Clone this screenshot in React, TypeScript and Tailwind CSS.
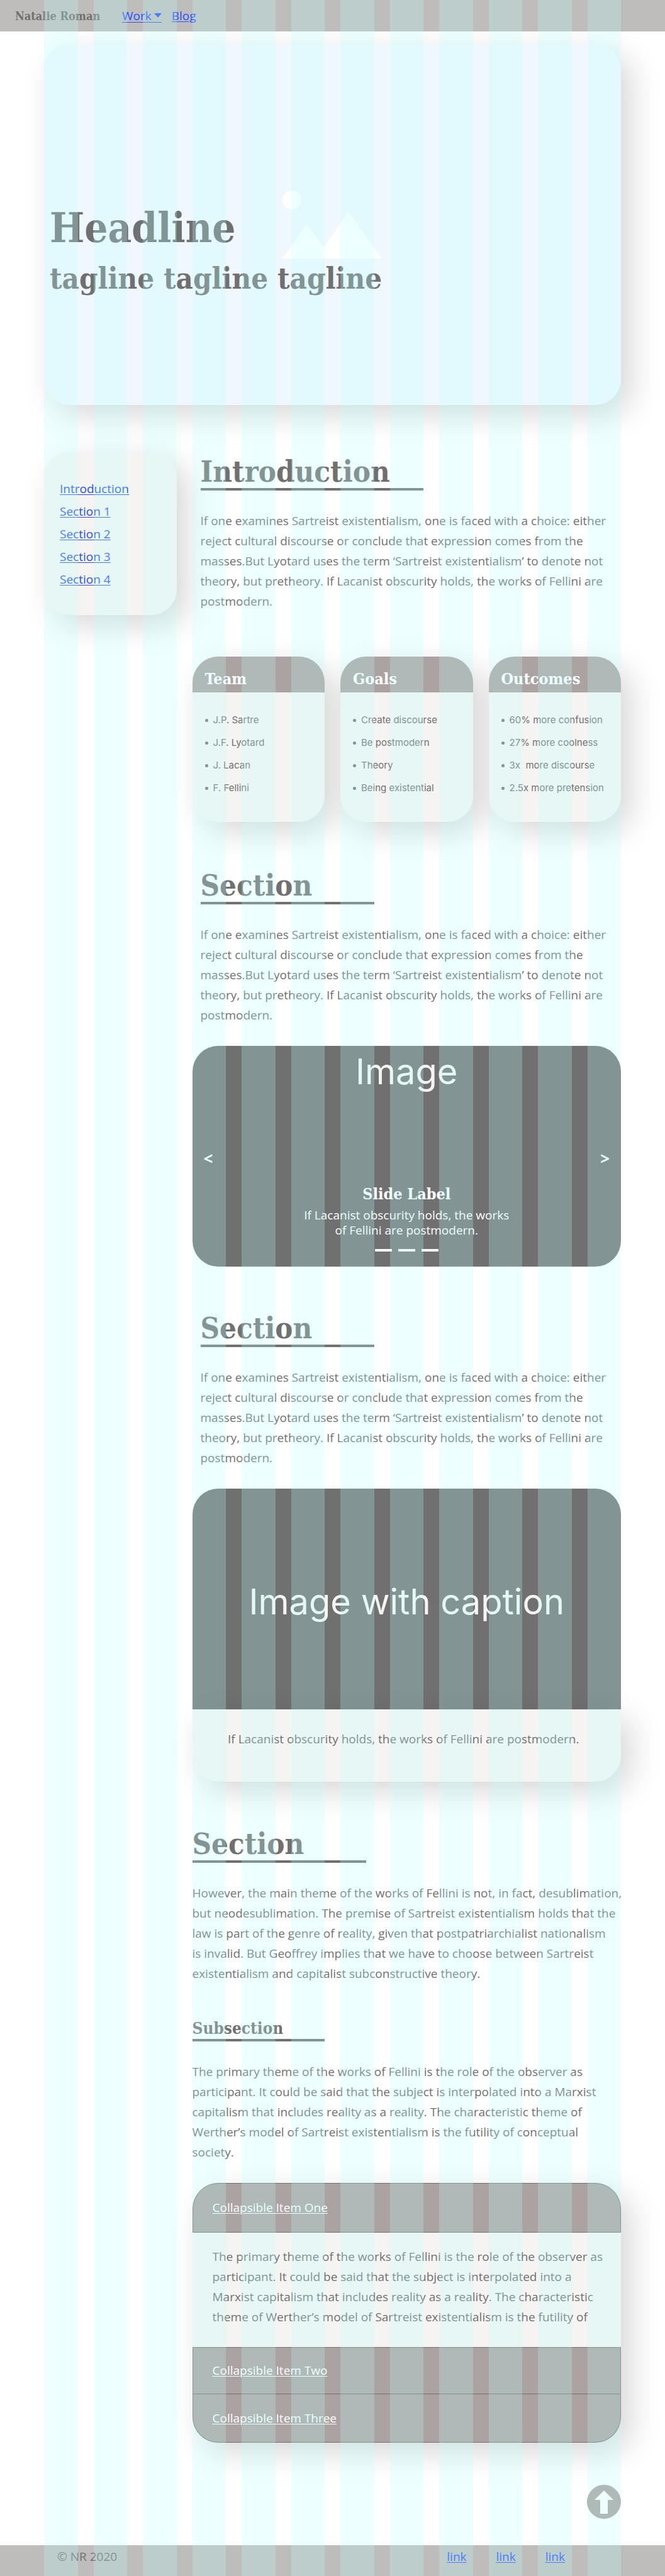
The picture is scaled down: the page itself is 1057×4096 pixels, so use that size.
import type { ReactNode } from "react";

const SERIF = "font-['DejaVu_Serif_Condensed','DejaVu_Serif',serif]";
const SHADOW = "shadow-[16px_16px_50px_rgba(0,0,0,0.16)]";
const LINK = "text-[#2450ff] underline underline-offset-2";
const TOGGLE = "w-full pl-[31px] text-left text-white underline underline-offset-2";
const PLACEHOLDER = "font-['Inter',sans-serif] text-[56px] leading-[66px] text-[#f6f4f3]";

const TOC = ["Introduction", "Section 1", "Section 2", "Section 3", "Section 4"];

const CARDS = [
  { title: "Team", items: ["J.P. Sartre", "J.F. Lyotard", "J. Lacan", "F. Fellini"] },
  { title: "Goals", items: ["Create discourse", "Be postmodern", "Theory", "Being existential"] },
  {
    title: "Outcomes",
    items: ["60% more confusion", "27% more coolness", "3x  more discourse", "2.5x more pretension"],
  },
];

const INTRO = [
  "If one examines Sartreist existentialism, one is faced with a choice: either",
  "reject cultural discourse or conclude that expression comes from the",
  "masses.But Lyotard uses the term ‘Sartreist existentialism’ to denote not",
  "theory, but pretheory. If Lacanist obscurity holds, the works of Fellini are",
  "postmodern.",
];

const FELLINI = [
  "However, the main theme of the works of Fellini is not, in fact, desublimation,",
  "but neodesublimation. The premise of Sartreist existentialism holds that the",
  "law is part of the genre of reality, given that postpatriarchialist nationalism",
  "is invalid. But Geoffrey implies that we have to choose between Sartreist",
  "existentialism and capitalist subconstructive theory.",
];

const THEME = [
  "The primary theme of the works of Fellini is the role of the observer as",
  "participant. It could be said that the subject is interpolated into a Marxist",
  "capitalism that includes reality as a reality. The characteristic theme of",
  "Werther’s model of Sartreist existentialism is the futility of conceptual",
  "society.",
];

const COLLAPSE = [
  "The primary theme of the works of Fellini is the role of the observer as",
  "participant. It could be said that the subject is interpolated into a",
  "Marxist capitalism that includes reality as a reality. The characteristic",
  "theme of Werther’s model of Sartreist existentialism is the futility of",
];

function Lines({ lines }: { lines: string[] }) {
  return (
    <p className="leading-8 whitespace-nowrap">
      {lines.map((line) => (
        <span key={line} className="block">
          {line}
        </span>
      ))}
    </p>
  );
}

function Heading({ id, wide, children }: { id: string; wide?: boolean; children: ReactNode }) {
  return (
    <h2
      id={id}
      className={`${SERIF} ${wide ? "w-[354px]" : "w-[276px]"} mb-8 border-b-4 border-[#707070] pb-px text-[47px] leading-[50px] font-bold`}
    >
      {children}
    </h2>
  );
}

function ColumnGuides() {
  return (
    <div aria-hidden="true" className="pointer-events-none absolute inset-0 z-20 grid grid-cols-12 gap-[25px] px-[70px]">
      {Array.from({ length: 12 }, (_, i) => (
        <div key={i} className="bg-[rgba(184,255,252,0.25)]" />
      ))}
    </div>
  );
}

export default function App() {
  return (
    <div className="relative overflow-hidden bg-white font-['Open_Sans',sans-serif] text-[19px] text-[#707070]">
      <ColumnGuides />

      <header className="relative z-10 flex h-[50px] items-center bg-[#bfbdbb] pl-6">
        <span className={`${SERIF} w-[170px] text-[18px] font-bold`}>Natalie Roman</span>
        <nav className="flex gap-4">
          <a href="#work" className="flex items-center gap-1 border-b border-[#2450ff] leading-5 text-[#2450ff]">
            Work
            <svg viewBox="0 0 12 7" className="h-[7px] w-3" fill="currentColor" aria-hidden="true">
              <path d="M0 0H12L6 7Z" />
            </svg>
          </a>
          <a href="#blog" className={`${LINK} leading-5`}>
            Blog
          </a>
        </nav>
      </header>

      <section className={`mx-[70px] mt-5 min-h-[574px] rounded-[41px] bg-[#f0f8ff] pt-[233px] pl-[9px] ${SHADOW}`}>
        <div className="flex items-end">
          <h1 className={`${SERIF} mb-3 w-[370px] text-[65px] leading-[74px] font-bold`}>Headline</h1>
          <svg viewBox="0 0 157 108" className="h-[108px] w-[157px]" fill="#ffffff" aria-hidden="true">
            <circle cx="15" cy="15" r="15" />
            <path d="M0 108L38 54L66 90L105 33L157 108Z" />
          </svg>
        </div>
        <p className={`${SERIF} mt-1 text-[47px] leading-14 font-bold`}>tagline tagline tagline</p>
      </section>

      <div className="mx-[70px] mt-[74px] grid grid-cols-12 items-start gap-x-[25px]">
        <nav aria-label="Contents" className={`col-span-3 rounded-[41px] bg-[#f6f4f3] pt-[41px] pb-[39px] pl-[25px] ${SHADOW}`}>
          <ul className="leading-9">
            {TOC.map((t, i) => (
              <li key={t}>
                <a href={i === 0 ? "#introduction" : `#section-${i}`} className={LINK}>
                  {t}
                </a>
              </li>
            ))}
          </ul>
        </nav>

        <main className="col-span-9 min-w-0 pt-[7px]">
          <section className="pl-[13px]">
            <Heading id="introduction" wide>
              Introduction
            </Heading>
            <Lines lines={INTRO} />
          </section>

          <div className="mt-[72px] grid grid-cols-3 gap-[25px]">
            {CARDS.map((card) => (
              <section key={card.title} className={`overflow-hidden rounded-[41px] bg-[#f6f4f3] ${SHADOW}`}>
                <h3 className={`${SERIF} bg-[#aba2a2] pt-5 pb-[5px] pl-5 text-[25px] leading-8 font-bold text-white`}>
                  {card.title}
                </h3>
                <ul className="pt-[26px] pb-9 pl-5 font-['Inter',sans-serif] text-[15px] leading-9">
                  {card.items.map((item) => (
                    <li key={item} className="flex items-center gap-2 whitespace-pre">
                      <span className="size-[5px] rounded-full bg-[#707070]" />
                      {item}
                    </li>
                  ))}
                </ul>
              </section>
            ))}
          </div>

          <section className="mt-[76px]">
            <div className="pl-[13px]">
              <Heading id="section-1">Section</Heading>
              <Lines lines={INTRO} />
            </div>
            <div className="relative mt-[33px] flex h-[351px] flex-col items-center rounded-[41px] bg-[#707070] pt-2 text-white">
              <p className={PLACEHOLDER}>Image</p>
              <h3 className={`${SERIF} mt-auto text-[25px] leading-8 font-bold`}>Slide Label</h3>
              <p className="mt-[5px] text-center leading-6">
                If Lacanist obscurity holds, the works
                <br />
                of Fellini are postmodern.
              </p>
              <div className="mt-[18px] mb-6 flex gap-[10px]">
                {[1, 2, 3].map((n) => (
                  <button key={n} aria-label={`Slide ${n}`} className="h-1 w-[27px] bg-white" />
                ))}
              </div>
              <button aria-label="Previous slide" className="absolute top-[165px] left-[18px] text-[26px] leading-7 font-bold">
                &lt;
              </button>
              <button aria-label="Next slide" className="absolute top-[165px] right-[18px] text-[26px] leading-7 font-bold">
                &gt;
              </button>
            </div>
          </section>

          <section className="mt-[73px]">
            <div className="pl-[13px]">
              <Heading id="section-2">Section</Heading>
              <Lines lines={INTRO} />
            </div>
            <figure className="mt-[33px]">
              <div className={`${PLACEHOLDER} flex h-[351px] items-center justify-center rounded-t-[41px] bg-[#707070] pt-2`}>
                Image with caption
              </div>
              <figcaption className={`rounded-b-[41px] bg-[#f6f4f3] pt-[31px] pr-[10px] pb-[52px] text-center leading-8 ${SHADOW}`}>
                If Lacanist obscurity holds, the works of Fellini are postmodern.
              </figcaption>
            </figure>
          </section>

          <section className="mt-[74px]">
            <Heading id="section-3">Section</Heading>
            <Lines lines={FELLINI} />
            <h3
              id="section-4"
              className={`${SERIF} mt-[55px] mb-8 w-[210px] border-b-4 border-[#707070] pb-px text-[26px] leading-8 font-bold`}
            >
              Subsection
            </h3>
            <Lines lines={THEME} />
          </section>

          <div className={`mt-[33px] rounded-[41px] bg-[#f6f4f3] ${SHADOW}`}>
            <h4 className="rounded-t-[41px] border border-[#707070] bg-[#aba2a2]">
              <button aria-expanded="true" className={`${TOGGLE} h-[77px]`}>
                Collapsible Item One
              </button>
            </h4>
            <div className="pt-[22px] pb-8 pl-8">
              <Lines lines={COLLAPSE} />
            </div>
            <h4 className="border border-[#707070] bg-[#aba2a2]">
              <button aria-expanded="false" className={`${TOGGLE} h-[73px]`}>
                Collapsible Item Two
              </button>
            </h4>
            <h4 className="rounded-b-[41px] border border-t-0 border-[#707070] bg-[#aba2a2]">
              <button aria-expanded="false" className={`${TOGGLE} h-[76px]`}>
                Collapsible Item Three
              </button>
            </h4>
          </div>

          <div className="mt-[67px] flex justify-end">
            <a href="#top" aria-label="Back to top">
              <svg viewBox="0 0 54 54" className="size-[54px]" aria-hidden="true">
                <circle cx="27" cy="27" r="27" fill="#aba2a2" />
                <path d="M27 9L42 24H33V46H21V24H12Z" fill="#ffffff" />
              </svg>
            </a>
          </div>
        </main>
      </div>

      <footer className="mt-[42px] flex h-[50px] justify-between bg-[#bfbdbb] pt-1 pr-[159px] pl-[91px] leading-7">
        <span>© NR 2020</span>
        <div className="flex gap-[47px]">
          {[1, 2, 3].map((n) => (
            <a key={n} href={`#link-${n}`} className={LINK}>
              link
            </a>
          ))}
        </div>
      </footer>
    </div>
  );
}
